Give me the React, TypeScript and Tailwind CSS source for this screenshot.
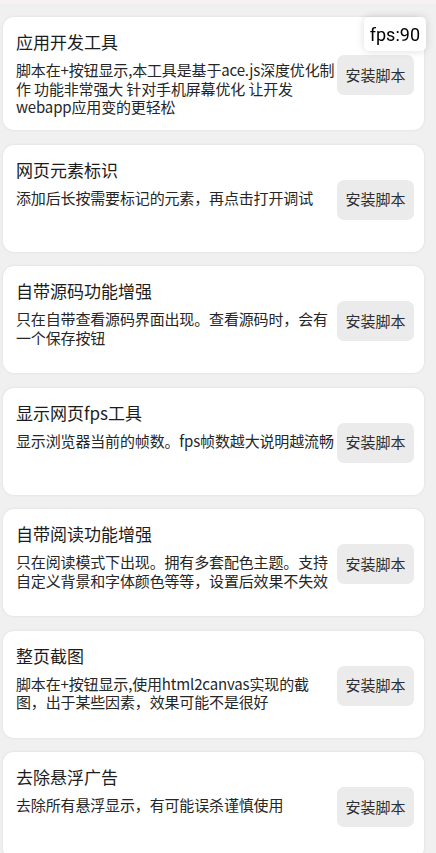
type Script = {
  title: string;
  lines: string[];
};

const scripts: Script[] = [
  {
    title: "应用开发工具",
    lines: [
      "脚本在+按钮显示,本工具是基于ace.js深度优化制",
      "作 功能非常强大 针对手机屏幕优化 让开发",
      "webapp应用变的更轻松",
    ],
  },
  {
    title: "网页元素标识",
    lines: ["添加后长按需要标记的元素，再点击打开调试"],
  },
  {
    title: "自带源码功能增强",
    lines: ["只在自带查看源码界面出现。查看源码时，会有", "一个保存按钮"],
  },
  {
    title: "显示网页fps工具",
    lines: ["显示浏览器当前的帧数。fps帧数越大说明越流畅"],
  },
  {
    title: "自带阅读功能增强",
    lines: [
      "只在阅读模式下出现。拥有多套配色主题。支持",
      "自定义背景和字体颜色等等，设置后效果不失效",
    ],
  },
  {
    title: "整页截图",
    lines: ["脚本在+按钮显示,使用html2canvas实现的截", "图，出于某些因素，效果可能不是很好"],
  },
  {
    title: "去除悬浮广告",
    lines: ["去除所有悬浮显示，有可能误杀谨慎使用"],
  },
];

const ScriptCard = ({ script }: { script: Script }) => {
  return (
    <div className="flex items-center min-h-[107px] bg-white rounded-[11px] shadow-[0_0_3px_rgba(0,0,0,0.09)] pl-[13px] pr-[10px]">
      <div className="self-start flex-1 min-w-0 pt-[12px] pb-[13px]">
        <div className="text-[17px] leading-[26px] text-[#1c1c1c]">
          {script.title}
        </div>
        <div className="mt-[6px] text-[15px] leading-[18.7px] text-[#262626] tracking-[-0.15px]">
          {script.lines.map((line) => (
            <div key={line} className="whitespace-nowrap">
              {line}
            </div>
          ))}
        </div>
      </div>
      <button className="shrink-0 mt-[3px] w-[77px] h-[40px] rounded-[7px] bg-[#ebebeb] text-[15px] text-[#2e2e2e]">
        安装脚本
      </button>
    </div>
  );
};

export default function App() {
  return (
    <div
      className="min-h-screen bg-[#f0f0f0] border-t-[4px] border-[#f8f1f3]"
      style={{ fontFamily: '"Noto Sans CJK SC", "Noto Sans", sans-serif' }}
    >
      <div className="flex flex-col gap-[14.5px] pt-[13px] pb-[14px] pl-[3px] pr-[12px]">
        {scripts.map((s) => (
          <ScriptCard key={s.title} script={s} />
        ))}
      </div>

      <div
        className="fixed top-[17px] right-[10px] h-[34px] px-[6px] flex items-center bg-white rounded-[5px] shadow-[0_0_8px_rgba(0,0,0,0.14)] text-[18px] text-black"
        style={{ fontFamily: "Roboto, sans-serif" }}
      >
        fps:90
      </div>
    </div>
  );
}
